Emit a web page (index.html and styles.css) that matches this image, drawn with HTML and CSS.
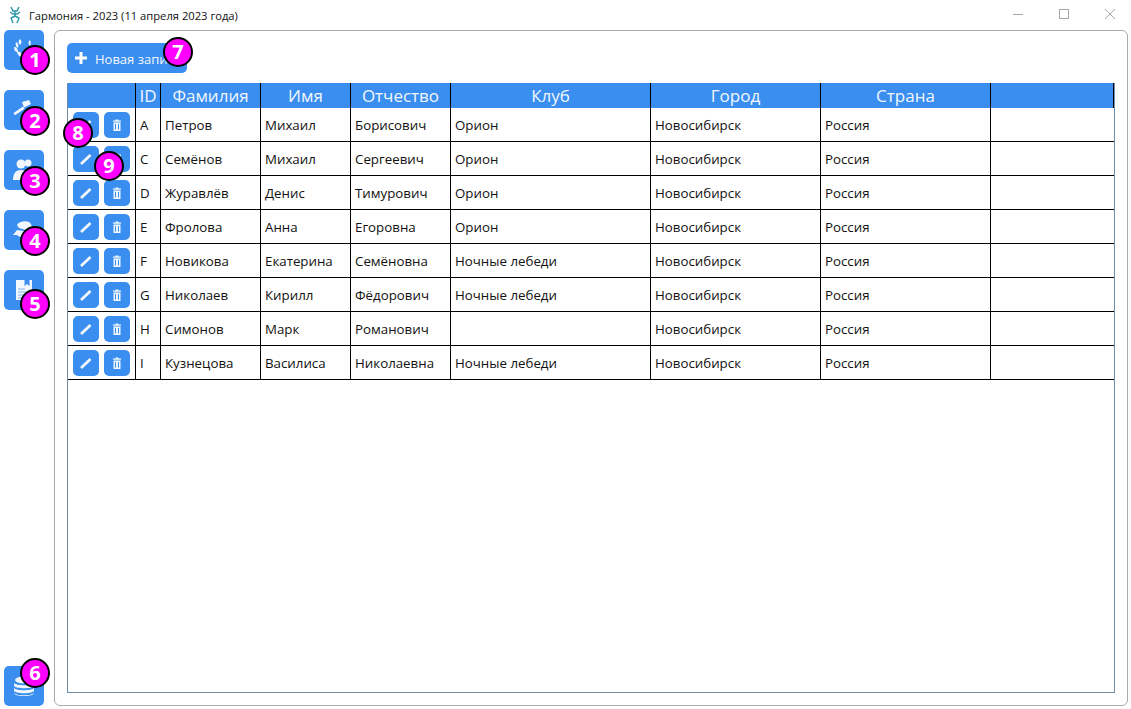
FILE: index.html
```html
<!DOCTYPE html>
<html lang="ru">
<head>
<meta charset="UTF-8">
<title>Гармония - 2023</title>
<link rel="stylesheet" href="styles.css">
</head>
<body>
    <div class="titlebar">
        <svg class="app-icon" width="14" height="18" viewBox="0 0 14 18" fill="none" stroke="#2a96a8" stroke-width="1.400">
            <path d="M3 1l2 4h4l2-4M7 5v5M2 6l3 2h4l3-2M7 10l-4 2 2 5M7 10l4 2-2 5"/>
        </svg>
        <span class="app-title">Гармония - 2023 (11 апреля 2023 года)</span>
        <div class="win-buttons">
            <svg width="12" height="12" viewBox="0 0 12 12" stroke="#a8a8a8" fill="none"><path d="M1 6.500h10"/></svg>
            <svg width="12" height="12" viewBox="0 0 12 12" stroke="#a8a8a8" fill="none"><rect x="1.500" y="1.500" width="9" height="9"/></svg>
            <svg width="12" height="12" viewBox="0 0 12 12" stroke="#a8a8a8" fill="none"><path d="M1 1l10 10M11 1L1 11"/></svg>
        </div>
    </div>

    <div class="main">
        <div class="sidebar">
            <div class="side-btn">
                <svg width="40" height="40" viewBox="0 0 40 40" fill="#f2f7fd">
                    <path d="M16 9c2 2 2 4 0 6-2-2-2-4 0-6zM12 12c2 1 3 3 2 6-2-1-3-3-2-6zM10 17c3 0 4 2 4 5-3 0-4-2-4-5zM13 22c3-1 5 1 6 5-3 0-5-1-6-5z"/>
                    <path d="M26 10c1 2 1 4 0 6-2-2-2-4 0-6z"/>
                </svg>
            </div>
            <div class="side-btn">
                <svg width="40" height="40" viewBox="0 0 40 40" fill="#f2f7fd">
                    <path d="M9.500 23l9.500-6.500 1.500 2.200-9.500 6.500z"/>
                    <path d="M18 12l7-2 2 4-7 3.500z"/>
                </svg>
            </div>
            <div class="side-btn">
                <svg width="40" height="40" viewBox="0 0 40 40" fill="#f2f7fd">
                    <circle cx="17" cy="14" r="4.500"/>
                    <circle cx="24" cy="13" r="3.500"/>
                    <path d="M9 30c0-7 3-10 8-10s8 3 8 10z"/>
                    <path d="M23 18h3c2 1 3 4 3 6h-4c0-2-1-4-2-6z"/>
                </svg>
            </div>
            <div class="side-btn">
                <svg width="40" height="40" viewBox="0 0 40 40" fill="#f2f7fd">
                    <path d="M13 15c1-3 8-5 12-3 2 1 3 4 3 7l-6 1-7-2z"/>
                    <path d="M9 25l4-5 7 1 2 4-6 2-3-2z"/>
                </svg>
            </div>
            <div class="side-btn">
                <svg width="40" height="40" viewBox="0 0 40 40">
                    <path d="M12 10h16v20H12z" fill="#f2f7fd"/>
                    <path d="M20.500 10h5v6l-2.500-2-2.500 2z" fill="#3a8eef"/>
                    <path d="M14 19h7M14 22h12M14 25h12M14 28h8" stroke="#7cb4f2" stroke-width="1.200"/>
                </svg>
            </div>
            <div class="side-btn side-btn-bottom">
                <svg width="40" height="40" viewBox="0 0 40 40" fill="#f2f7fd">
                    <ellipse cx="20" cy="14" rx="9" ry="3.500"/>
                    <path d="M10 17c2 3 18 3 20 0v3c-2 3-18 3-20 0zM10 22c2 3 18 3 20 0v3c-2 3-18 3-20 0zM10 27c2 3 18 3 20 0 0 2-4 3-10 3s-10-1-10-3z"/>
                </svg>
            </div>
        </div>

        <div class="panel">
            <button class="add-btn">
                <svg width="12" height="12" viewBox="0 0 12 12" fill="#fff"><path d="M4.500 0h3v4.500H12v3H7.500V12h-3V7.500H0v-3h4.500z"/></svg>
                <span class="add-label">Новая запись</span>
            </button>

            <div class="table-box">
                <table class="people">
                    <thead>
                        <tr>
                            <th class="c-act"></th>
                            <th class="c-id">ID</th>
                            <th class="c-fam">Фамилия</th>
                            <th class="c-name">Имя</th>
                            <th class="c-otch">Отчество</th>
                            <th class="c-club">Клуб</th>
                            <th class="c-city">Город</th>
                            <th class="c-country">Страна</th>
                            <th class="c-rest"></th>
                        </tr>
                    </thead>
                    <tbody id="rows"></tbody>
                </table>
            </div>
        </div>
    </div>

    <span class="badge b1">1</span>
    <span class="badge b2">2</span>
    <span class="badge b3">3</span>
    <span class="badge b4">4</span>
    <span class="badge b5">5</span>
    <span class="badge b6">6</span>
    <span class="badge b7">7</span>
    <span class="badge b8">8</span>
    <span class="badge b9">9</span>

    <script>
        var people = [
            ['A', 'Петров', 'Михаил', 'Борисович', 'Орион'],
            ['C', 'Семёнов', 'Михаил', 'Сергеевич', 'Орион'],
            ['D', 'Журавлёв', 'Денис', 'Тимурович', 'Орион'],
            ['E', 'Фролова', 'Анна', 'Егоровна', 'Орион'],
            ['F', 'Новикова', 'Екатерина', 'Семёновна', 'Ночные лебеди'],
            ['G', 'Николаев', 'Кирилл', 'Фёдорович', 'Ночные лебеди'],
            ['H', 'Симонов', 'Марк', 'Романович', ''],
            ['I', 'Кузнецова', 'Василиса', 'Николаевна', 'Ночные лебеди']
        ];

        var editIcon = '<svg width="26" height="26" viewBox="0 0 26 26"><path d="M8 18L17.500 9" stroke="#f2f7fd" stroke-width="2.800" fill="none"/></svg>';
        var trashIcon = '<svg width="26" height="26" viewBox="0 0 26 26" fill="#f2f7fd"><path d="M11.500 7.500h3v1h2.500v1.200H9V8.500h2.500z"/><path d="M9.500 10.500h7v8.500h-7zM11 12v5.500h1V12zM14 12v5.500h1V12z" fill-rule="evenodd"/></svg>';

        var html = '';
        people.forEach(function(p) {
            html += '<tr><td class="c-act"><div class="row-btns"><span class="row-btn">' + editIcon + '</span><span class="row-btn">' + trashIcon + '</span></div></td>';
            p.forEach(function(v) {
                html += '<td>' + v + '</td>';
            });
            html += '<td>Новосибирск</td><td>Россия</td><td class="c-rest"></td></tr>';
        });
        document.getElementById('rows').innerHTML = html;
    </script>
</body>
</html>
```

FILE: styles.css
```css
html, body {
    height: 100%;
}

body {
    font-family: "Open Sans", "Noto Sans", sans-serif;
    background-color: #fff;
    color: #111;
    margin: 0;
    overflow: hidden;
    position: relative;
}

.titlebar {
    height: 30px;
    display: flex;
    align-items: center;
    padding-left: 8px;
    font-size: 11.2px;
}

.app-icon {
    margin-right: 7px;
}

.win-buttons {
    margin-left: auto;
    display: flex;
    gap: 34px;
    padding-right: 15px;
    margin-top: -2px;
}

.main {
    display: flex;
    height: 676px;
}

.sidebar {
    width: 40px;
    padding-left: 4px;
    margin-right: 10px;
    display: flex;
    flex-direction: column;
    gap: 20px;
}

.side-btn {
    width: 40px;
    height: 40px;
    flex: none;
    background-color: #3a8eef;
    border-radius: 5px;
}

.side-btn svg {
    display: block;
}

.side-btn-bottom {
    margin-top: auto;
}

.panel {
    width: 1074px;
    box-sizing: border-box;
    border: 1px solid #aaa;
    border-radius: 6px;
    padding: 12px;
    display: flex;
    flex-direction: column;
    align-items: flex-start;
}

.add-btn {
    width: 120px;
    height: 30px;
    padding: 0 0 0 8px;
    background-color: #3a8eef;
    color: #f2f7fd;
    border: none;
    border-radius: 5px;
    font-family: inherit;
    font-size: 13px;
    display: flex;
    align-items: center;
    gap: 8px;
    white-space: nowrap;
    overflow: hidden;
}

.add-label {
    padding-top: 1px;
}

.table-box {
    margin-top: 10px;
    width: 1048px;
    height: 610px;
    box-sizing: border-box;
    border: 1px solid #6f8fa8;
    border-top: none;
}

.people {
    border-collapse: separate;
    border-spacing: 0;
    table-layout: fixed;
    width: 1046px;
}

.people th {
    height: 25px;
    padding: 0;
    background-color: #3a8eef;
    color: #f2f7fd;
    font-size: 17px;
    font-weight: normal;
    line-height: 25px;
    border-right: 1px solid #000;
}

.people td {
    height: 33px;
    padding: 0 0 0 4px;
    font-size: 13.3px;
    white-space: nowrap;
    border-right: 1px solid #000;
    border-bottom: 1px solid #000;
}

.people td.c-act {
    padding: 0;
}

.people td.c-rest {
    border-right: none;
}

.c-act { width: 67px; }
.c-id { width: 24px; }
.c-fam { width: 99px; }
.c-name { width: 89px; }
.c-otch { width: 99px; }
.c-club { width: 199px; }
.c-city { width: 169px; }
.c-country { width: 169px; }

.row-btns {
    display: flex;
    gap: 5px;
    padding-left: 5px;
}

.row-btn {
    width: 26px;
    height: 26px;
    background-color: #3a8eef;
    border-radius: 5px;
}

.row-btn svg {
    display: block;
}

.badge {
    position: absolute;
    width: 30px;
    height: 30px;
    box-sizing: border-box;
    border: 2px solid #000;
    border-radius: 50%;
    background-color: #f0f;
    color: #fff;
    font-size: 20px;
    font-weight: bold;
    line-height: 26px;
    text-align: center;
}

.b1 { left: 20px; top: 45px; }
.b2 { left: 20px; top: 106px; }
.b3 { left: 20px; top: 166px; }
.b4 { left: 20px; top: 226px; }
.b5 { left: 20px; top: 289px; }
.b6 { left: 20px; top: 658px; }
.b7 { left: 163px; top: 37px; }
.b8 { left: 63px; top: 118px; }
.b9 { left: 94px; top: 151px; }
```
